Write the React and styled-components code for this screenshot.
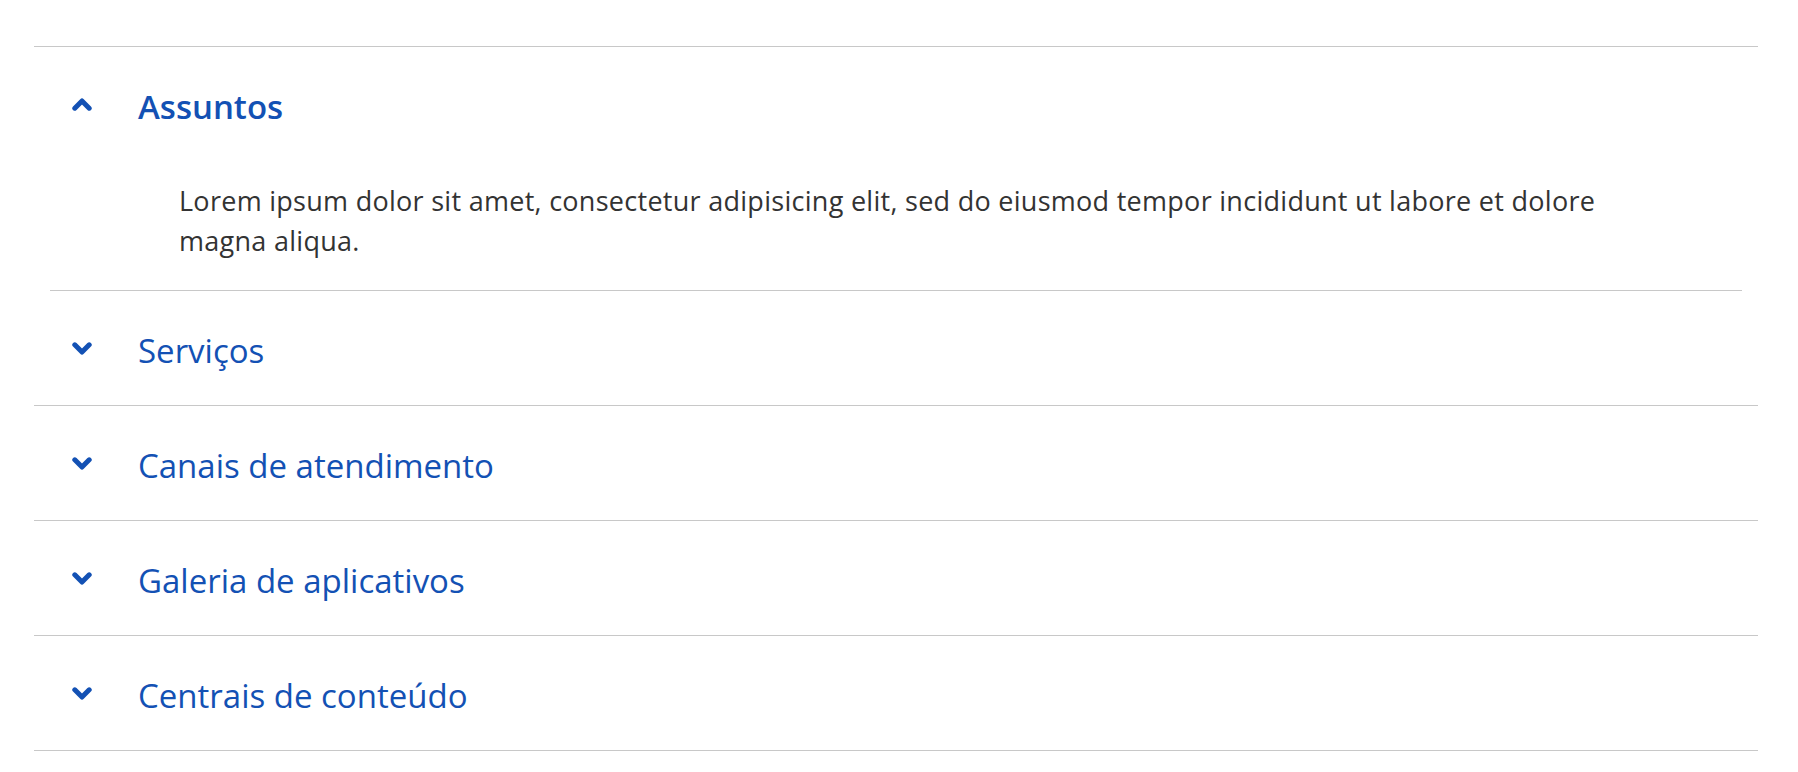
import React, { useState } from "react";
import styled, { createGlobalStyle } from "styled-components";

const items = [
    {
        title: "Assuntos",
        text: "Lorem ipsum dolor sit amet, consectetur adipisicing elit, sed do eiusmod tempor incididunt ut labore et dolore magna aliqua.",
    },
    { title: "Serviços", text: "Lorem ipsum dolor sit amet, consectetur adipisicing elit." },
    { title: "Canais de atendimento", text: "Lorem ipsum dolor sit amet, consectetur adipisicing elit." },
    { title: "Galeria de aplicativos", text: "Lorem ipsum dolor sit amet, consectetur adipisicing elit." },
    { title: "Centrais de conteúdo", text: "Lorem ipsum dolor sit amet, consectetur adipisicing elit." },
];

function Chevron({ up }) {
    return (
        <Icon viewBox="0 0 20 13" $up={up}>
            <polyline points="2.8,2.8 10,10 17.2,2.8" />
        </Icon>
    );
}

function App() {
    const [open, setOpen] = useState(0);

    return (
        <>
            <GlobalStyle />
            <Wrapper>
                <List>
                    {items.map((item, i) => (
                        <Item key={item.title} $open={open === i}>
                            <Header onClick={() => setOpen(open === i ? -1 : i)}>
                                <Chevron up={open === i} />
                                <Title $open={open === i}>{item.title}</Title>
                            </Header>
                            {open === i && (
                                <Content>
                                    <Text>{item.text}</Text>
                                </Content>
                            )}
                        </Item>
                    ))}
                </List>
            </Wrapper>
        </>
    );
}

export default App;

const GlobalStyle = createGlobalStyle`
    body {
        margin: 0;
        background: #ffffff;
        font-family: "Open Sans", Lato, sans-serif;
    }
`;

const Wrapper = styled.div`
    padding: 46px 40px 0 34px;
`;

const List = styled.div`
    border-top: 1px solid #c8c8c8;
`;

const Item = styled.div`
    border-bottom: ${(p) => (p.$open ? "none" : "1px solid #c8c8c8")};
`;

const Header = styled.div`
    height: 114px;
    display: flex;
    align-items: center;
    gap: 46px;
    padding-left: 38px;
    cursor: pointer;
`;

const Icon = styled.svg`
    width: 20px;
    height: 13px;
    flex-shrink: 0;
    transform: ${(p) => (p.$up ? "rotate(180deg)" : "none")};

    polyline {
        fill: none;
        stroke: #1351b4;
        stroke-width: 5;
        stroke-linecap: round;
        stroke-linejoin: round;
    }
`;

const Title = styled.span`
    font-size: 33px;
    font-weight: ${(p) => (p.$open ? 600 : 400)};
    color: #1351b4;
    position: relative;
    top: 2px;
`;

const Content = styled.div`
    margin: 0 16px;
    padding: 20px 129px 29px 129px;
    border-bottom: 1px solid #c8c8c8;
`;

const Text = styled.p`
    margin: 0;
    font-size: 27px;
    line-height: 40px;
    letter-spacing: 0.28px;
    color: #333333;
`;
